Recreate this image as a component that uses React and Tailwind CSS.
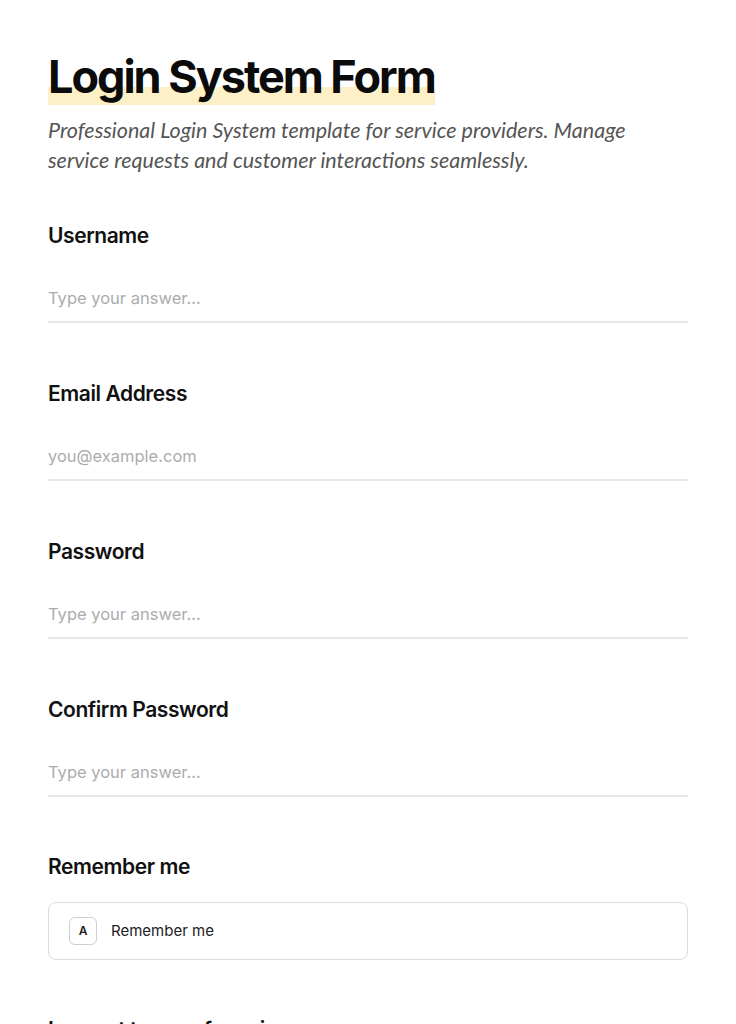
const fields = [
  { label: 'Username', placeholder: 'Type your answer...' },
  { label: 'Email Address', placeholder: 'you@example.com' },
  { label: 'Password', placeholder: 'Type your answer...' },
  { label: 'Confirm Password', placeholder: 'Type your answer...' },
];

function TextField({ label, placeholder }) {
  return (
    <div className="mb-[57px]">
      <label className="block text-[21px] font-semibold leading-7 tracking-[-0.02em] text-[#111]">{label}</label>
      <input
        type="text"
        placeholder={placeholder}
        className="mt-6 block h-[49px] w-full border-b-2 border-[#e6e6e6] bg-transparent text-[16.5px] text-[#222] outline-none placeholder:text-[#acacac]"
      />
    </div>
  );
}

export default function App() {
  return (
    <div className="min-h-screen bg-white font-['Inter',sans-serif]">
      <div className="px-12 pt-[49px]">
        <h1 className="inline-block bg-[linear-gradient(transparent_67%,#fdf0c6_67%)] text-[45px] font-bold leading-[56px] tracking-[-0.045em] text-[#0b0b0b]">
          Login System Form
        </h1>
        <p className="mt-[10px] font-['Lato',sans-serif] text-[21.5px] italic leading-[30px] text-[#555]">
          Professional Login System template for service providers. Manage service requests and customer interactions seamlessly.
        </p>

        <div className="mt-[47px]">
          {fields.map((f) => (
            <TextField key={f.label} label={f.label} placeholder={f.placeholder} />
          ))}

          <div className="-mt-px mb-14">
            <div className="text-[21px] font-semibold leading-7 tracking-[-0.02em] text-[#111]">Remember me</div>
            <label className="mt-[21px] flex h-[58px] items-center gap-[14px] rounded-lg border border-[#dcdcdc] px-5">
              <span className="flex h-7 w-7 items-center justify-center rounded-md border border-[#cfcfcf] text-[12px] font-semibold text-[#222]">A</span>
              <span className="text-[15px] text-[#222]">Remember me</span>
            </label>
          </div>

          <div className="text-[21px] font-semibold leading-7 tracking-[-0.02em] text-[#111]">I accept terms of service</div>
        </div>
      </div>
    </div>
  );
}
